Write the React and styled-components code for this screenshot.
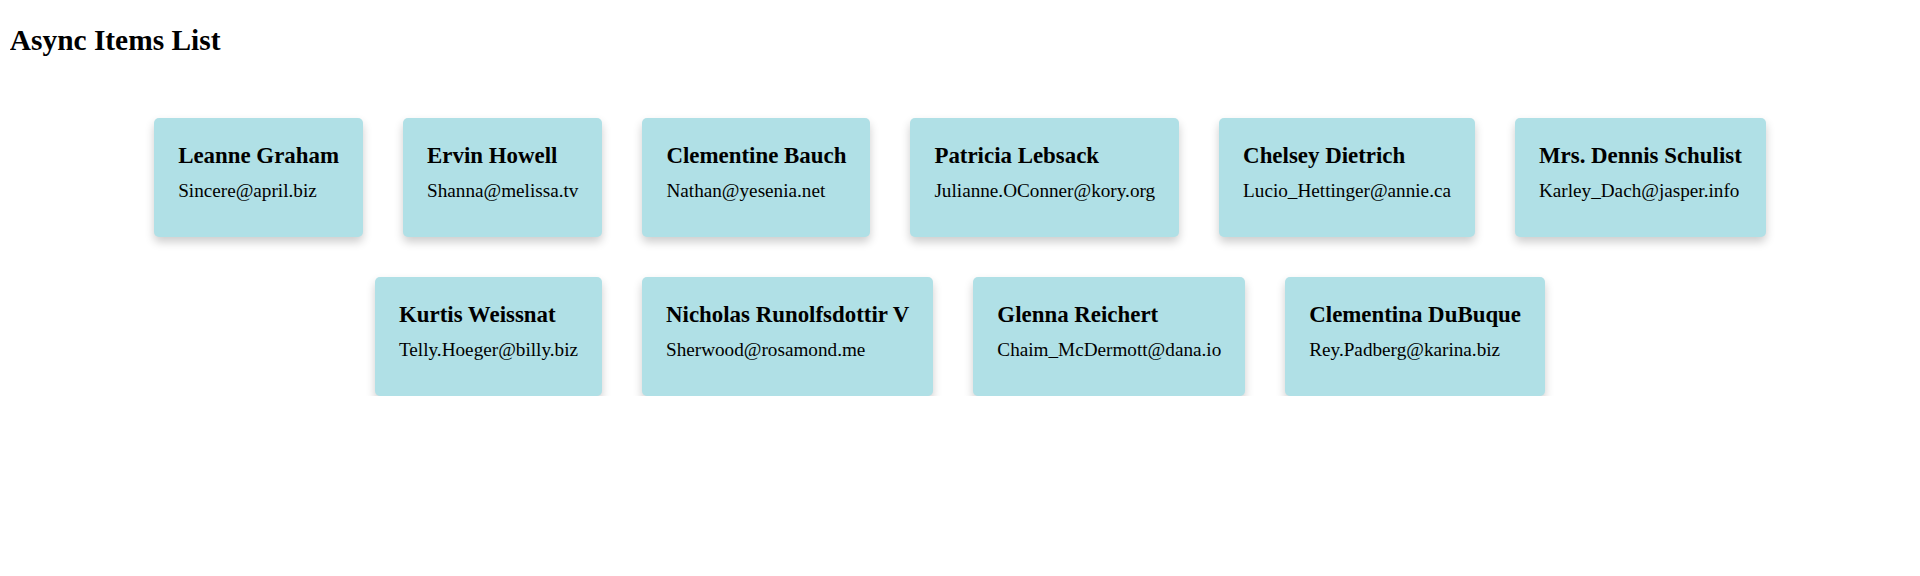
import styled, { createGlobalStyle } from "styled-components"

const users = [
  { id: 1, name: "Leanne Graham", email: "Sincere@april.biz" },
  { id: 2, name: "Ervin Howell", email: "Shanna@melissa.tv" },
  { id: 3, name: "Clementine Bauch", email: "Nathan@yesenia.net" },
  { id: 4, name: "Patricia Lebsack", email: "Julianne.OConner@kory.org" },
  { id: 5, name: "Chelsey Dietrich", email: "Lucio_Hettinger@annie.ca" },
  { id: 6, name: "Mrs. Dennis Schulist", email: "Karley_Dach@jasper.info" },
  { id: 7, name: "Kurtis Weissnat", email: "Telly.Hoeger@billy.biz" },
  { id: 8, name: "Nicholas Runolfsdottir V", email: "Sherwood@rosamond.me" },
  { id: 9, name: "Glenna Reichert", email: "Chaim_McDermott@dana.io" },
  { id: 10, name: "Clementina DuBuque", email: "Rey.Padberg@karina.biz" },
]

function App() {
  return (
    <>
      <GlobalStyle />
      <Title>Async Items List</Title>
      <List>
        {users.map(user => (
          <Card key={user.id}>
            <Name>{user.name}</Name>
            <Email>{user.email}</Email>
          </Card>
        ))}
      </List>
    </>
  )
}

const GlobalStyle = createGlobalStyle`
  body {
    margin: 9.8px;
    font-family: "Liberation Serif", "Times New Roman", serif;
    color: #000;
    background: #fff;
  }
`

const Title = styled.h2`
  font-size: 29.4px;
  font-weight: 700;
  margin: 14.4px 0 24.4px;
`

const List = styled.div`
  display: flex;
  flex-wrap: wrap;
  justify-content: center;
  gap: 40px;
  padding: 0 24px;
  margin-top: 61px;
`

const Card = styled.div`
  background-color: #b0e0e6;
  padding: 25px 24px 24px;
  border-radius: 5px;
  box-shadow: 0 5px 10px rgba(0, 0, 0, 0.2);
`

const Name = styled.h3`
  font-size: 22.9px;
  font-weight: 700;
  margin: 0 0 11px;
`

const Email = styled.p`
  font-size: 19.2px;
  margin: 0 0 11px;
`

export default App
